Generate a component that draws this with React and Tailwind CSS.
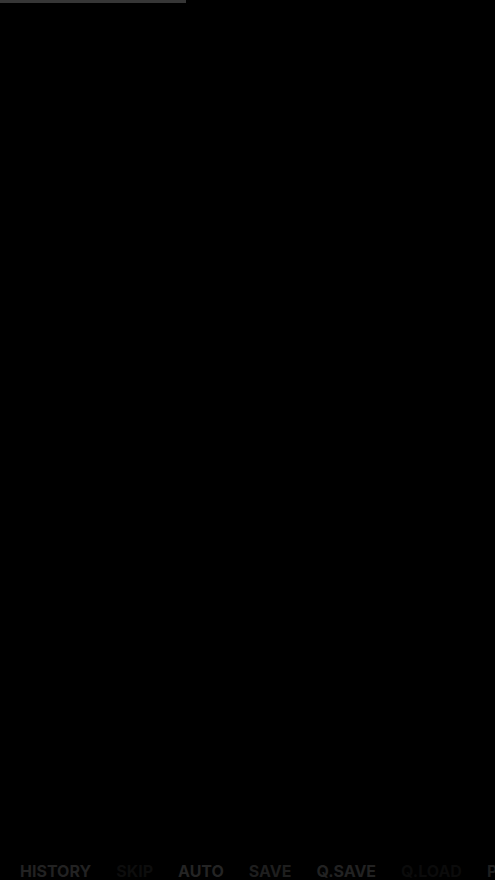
import React from "react";

const menuItems = [
  { label: "HISTORY", color: "text-[#222222]" },
  { label: "SKIP", color: "text-[#0d0d0d]" },
  { label: "AUTO", color: "text-[#242424]" },
  { label: "SAVE", color: "text-[#1e1e1e]" },
  { label: "Q.SAVE", color: "text-[#222222]" },
  { label: "Q.LOAD", color: "text-[#0b0b0b]" },
  { label: "PREFS", color: "text-[#1e1e1e]" },
];

const App = () => {
  return (
    <div className="flex min-h-screen flex-col overflow-hidden bg-black">
      {/* Progress line */}
      <div className="h-[3px] w-full">
        <div className="h-full w-3/8 bg-[#363636]" />
      </div>

      {/* Scene */}
      <main className="flex-1" />

      {/* Quick menu */}
      <nav className="flex gap-[25px] overflow-hidden pl-5 font-['Inter','Liberation_Sans',sans-serif] text-base leading-[18px] font-bold">
        {menuItems.map((item) => (
          <button
            key={item.label}
            type="button"
            className={`shrink-0 whitespace-nowrap ${item.color}`}
          >
            {item.label}
          </button>
        ))}
      </nav>
    </div>
  );
};

export default App;
